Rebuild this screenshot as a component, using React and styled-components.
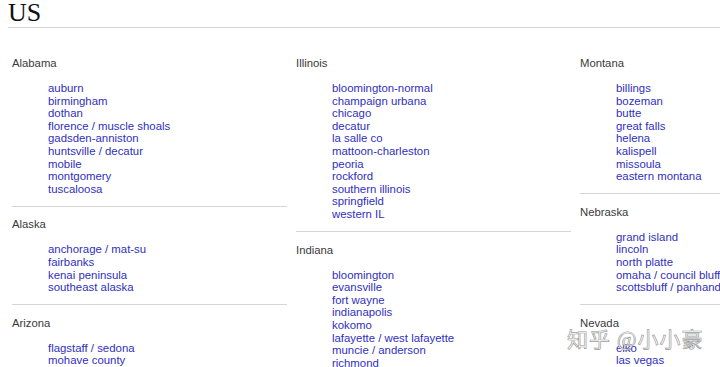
import React from "react";
import styled, { createGlobalStyle } from "styled-components";

const GlobalStyle = createGlobalStyle`
  html, body {
    margin: 0;
    padding: 0;
    background: #fff;
    overflow: hidden;
  }
  body {
    font-family: "Liberation Sans", Arial, sans-serif;
  }
`;

const Page = styled.div`
  position: relative;
  padding-left: 8px;
  width: 1000px;
`;

const Title = styled.h1`
  margin: 0;
  width: 712px;
  font-family: "Liberation Serif", "Times New Roman", serif;
  font-weight: normal;
  font-size: 26px;
  line-height: 26px;
  color: #111;
  padding-bottom: 1px;
  border-bottom: 1px solid #d4d4d4;
`;

const Columns = styled.div`
  display: grid;
  grid-template-columns: repeat(3, 284px);
  padding: 29px 0 0 4px;
`;

const Column = styled.div`
  width: 275px;
`;

const State = styled.section`
  & + & {
    border-top: 1px solid #d6d6d6;
    margin-top: 10.5px;
    padding-top: 11.5px;
  }
`;

const StateName = styled.h4`
  margin: 0 0 12px;
  font-size: 11.3px;
  line-height: 13px;
  font-weight: normal;
  color: #3a3a3a;
`;

const Links = styled.ul`
  list-style: none;
  margin: 0;
  padding: 0 0 0 36px;
`;

const Link = styled.li`
  font-size: 11.4px;
  line-height: 12.6px;
  color: #2f2fc0;
  white-space: nowrap;
  cursor: pointer;
`;

const Watermark = styled.div`
  position: absolute;
  left: 567px;
  top: 323px;
  font-family: "Noto Sans CJK SC", sans-serif;
  font-size: 21px;
  letter-spacing: 1px;
  color: rgba(255, 255, 255, 0.85);
  -webkit-text-stroke: 0.7px rgba(120, 120, 120, 0.75);
  pointer-events: none;
`;

const columns = [
  [
    {
      name: "Alabama",
      links: [
        "auburn",
        "birmingham",
        "dothan",
        "florence / muscle shoals",
        "gadsden-anniston",
        "huntsville / decatur",
        "mobile",
        "montgomery",
        "tuscaloosa",
      ],
    },
    {
      name: "Alaska",
      links: ["anchorage / mat-su", "fairbanks", "kenai peninsula", "southeast alaska"],
    },
    {
      name: "Arizona",
      links: ["flagstaff / sedona", "mohave county", "phoenix", "prescott", "show low"],
    },
  ],
  [
    {
      name: "Illinois",
      links: [
        "bloomington-normal",
        "champaign urbana",
        "chicago",
        "decatur",
        "la salle co",
        "mattoon-charleston",
        "peoria",
        "rockford",
        "southern illinois",
        "springfield",
        "western IL",
      ],
    },
    {
      name: "Indiana",
      links: [
        "bloomington",
        "evansville",
        "fort wayne",
        "indianapolis",
        "kokomo",
        "lafayette / west lafayette",
        "muncie / anderson",
        "richmond",
        "south bend / michiana",
      ],
    },
  ],
  [
    {
      name: "Montana",
      links: [
        "billings",
        "bozeman",
        "butte",
        "great falls",
        "helena",
        "kalispell",
        "missoula",
        "eastern montana",
      ],
    },
    {
      name: "Nebraska",
      links: [
        "grand island",
        "lincoln",
        "north platte",
        "omaha / council bluffs",
        "scottsbluff / panhandle",
      ],
    },
    {
      name: "Nevada",
      links: ["elko", "las vegas", "reno / tahoe"],
    },
  ],
];

const App = () => {
  return (
    <Page>
      <GlobalStyle />
      <Title>US</Title>
      <Columns>
        {columns.map((col, i) => (
          <Column key={i}>
            {col.map((state) => (
              <State key={state.name}>
                <StateName>{state.name}</StateName>
                <Links>
                  {state.links.map((l) => (
                    <Link key={l}>{l}</Link>
                  ))}
                </Links>
              </State>
            ))}
          </Column>
        ))}
      </Columns>
      <Watermark>知乎 @小小豪</Watermark>
    </Page>
  );
};

export default App;
